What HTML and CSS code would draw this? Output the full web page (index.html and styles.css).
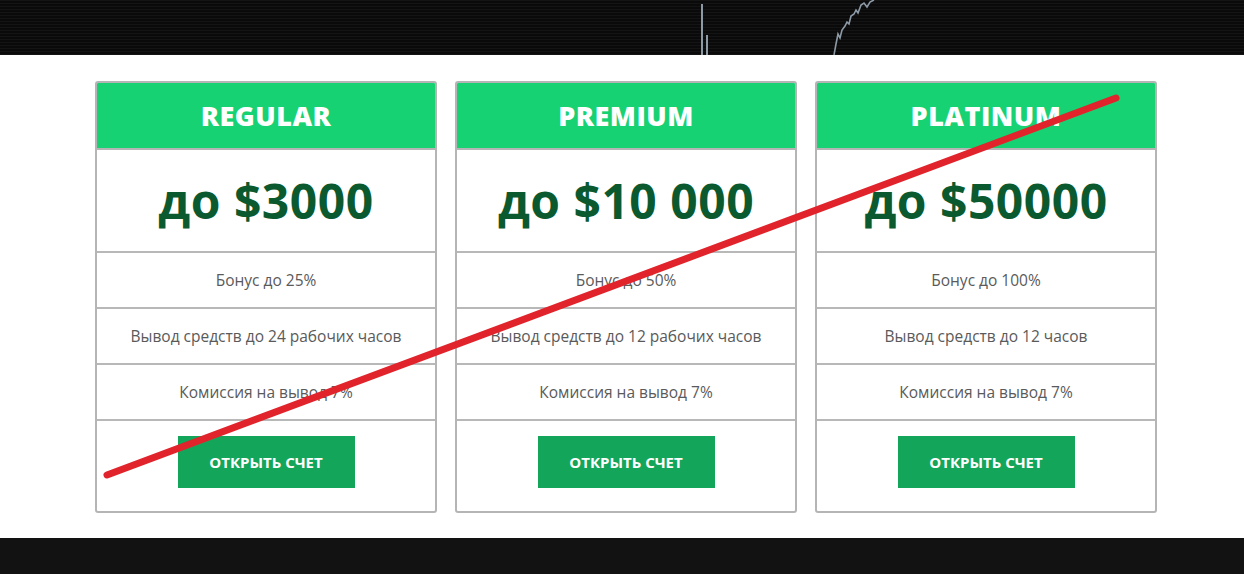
FILE: index.html
```html
<!DOCTYPE html>
<html lang="ru">
<head>
    <meta charset="UTF-8">
    <meta name="viewport" content="width=device-width, initial-scale=1.0">
    <title>Тарифы</title>
    <link rel="stylesheet" href="styles.css">
</head>
<body>

    <!-- Top banner with chart -->
    <div class="banner">
        <svg class="chart" width="1244" height="55" viewBox="0 0 1244 55">
            <line x1="702" y1="4" x2="702" y2="55" stroke="#8d9aa6" stroke-width="2"/>
            <line x1="707" y1="35" x2="707" y2="55" stroke="#8d9aa6" stroke-width="2"/>
            <polyline points="834,55 836,44 838,34 840,38 842,30 845,26 847,22 849,24 851,16 854,14 856,10 858,13 861,5 864,3 867,7 870,2 874,0"
                      fill="none" stroke="#8d9aa6" stroke-width="1.6"/>
        </svg>
    </div>

    <!-- Plans -->
    <section class="plans">
        <div class="plan">
            <div class="plan-title">REGULAR</div>
            <div class="plan-price">до $3000</div>
            <div class="plan-row">Бонус до 25%</div>
            <div class="plan-row">Вывод средств до 24 рабочих часов</div>
            <div class="plan-row">Комиссия на вывод 7%</div>
            <div class="plan-action"><a href="#" class="btn">Открыть счет</a></div>
        </div>
        <div class="plan">
            <div class="plan-title">PREMIUM</div>
            <div class="plan-price">до $10 000</div>
            <div class="plan-row">Бонус до 50%</div>
            <div class="plan-row">Вывод средств до 12 рабочих часов</div>
            <div class="plan-row">Комиссия на вывод 7%</div>
            <div class="plan-action"><a href="#" class="btn">Открыть счет</a></div>
        </div>
        <div class="plan">
            <div class="plan-title">PLATINUM</div>
            <div class="plan-price">до $50000</div>
            <div class="plan-row">Бонус до 100%</div>
            <div class="plan-row">Вывод средств до 12 часов</div>
            <div class="plan-row">Комиссия на вывод 7%</div>
            <div class="plan-action"><a href="#" class="btn">Открыть счет</a></div>
        </div>
    </section>

    <footer></footer>

    <!-- Red strike-through over the plans -->
    <svg class="strike" width="1244" height="574" viewBox="0 0 1244 574">
        <line x1="107" y1="475" x2="1116" y2="98" stroke="#e1232b" stroke-width="7" stroke-linecap="round"/>
    </svg>

</body>
</html>
```

FILE: styles.css
```css
body {
    margin: 0;
    font-family: "Open Sans", "Noto Sans", sans-serif;
    background-color: #fff;
    position: relative;
    width: 1244px;
    height: 574px;
    overflow: hidden;
}
.banner {
    height: 55px;
    background-color: #0c0c0c;
    background-image: repeating-linear-gradient(to bottom, #141414 0, #141414 1px, #0a0a0a 1px, #0a0a0a 3px);
}
.chart {
    display: block;
}
.plans {
    display: flex;
    gap: 18px;
    padding: 26px 0 25px 95px;
}
.plan {
    width: 338px;
    border: 2px solid #b5b5b5;
    border-radius: 3px;
    overflow: hidden;
    text-align: center;
}
.plan-title {
    height: 65px;
    line-height: 65px;
    background-color: #17d273;
    color: #fff;
    font-size: 27px;
    font-weight: 800;
    letter-spacing: 0.5px;
    border-bottom: 2px solid #b5b5b5;
}
.plan-price {
    height: 101px;
    line-height: 101px;
    color: #0b5a2f;
    font-size: 48px;
    font-weight: 700;
    letter-spacing: 0.5px;
    border-bottom: 2px solid #b8b8b8;
}
.plan-row {
    height: 54px;
    line-height: 54px;
    color: #5a5a5a;
    font-size: 15.5px;
    border-bottom: 2px solid #b8b8b8;
}
.plan-action {
    height: 90px;
    padding-top: 15px;
    box-sizing: border-box;
}
.btn {
    display: inline-block;
    width: 177px;
    height: 52px;
    line-height: 52px;
    background-color: #13a65a;
    color: #fff;
    font-size: 15px;
    font-weight: 700;
    text-transform: uppercase;
    text-decoration: none;
}
footer {
    height: 36px;
    background-color: #121212;
}
.strike {
    position: absolute;
    left: 0;
    top: 0;
    pointer-events: none;
}
```
